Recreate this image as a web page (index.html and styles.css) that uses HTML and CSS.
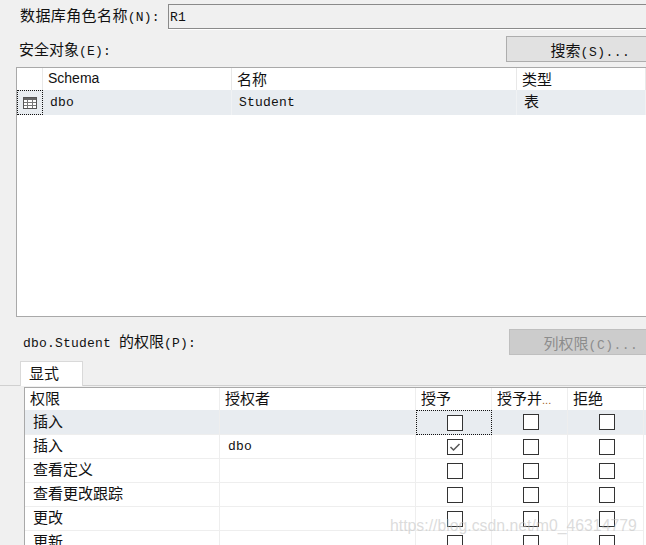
FILE: index.html
```html
<!DOCTYPE html>
<html>
<head>
  <meta charset="utf-8">
  <link rel="stylesheet" href="styles.css">
</head>
<body>
  <div class="name-row">
    <label class="role-label">数据库角色名称<span class="lat">(N):</span></label>
    <div class="name-input"><span class="lat">R1</span></div>
  </div>

  <div class="objects-head">
    <label>安全对象<span class="lat">(E):</span></label>
    <button class="btn">搜索<span class="lat">(S)...</span></button>
  </div>

  <div class="objects-grid">
    <div class="grid-row head-row">
      <div class="cell"></div>
      <div class="cell schema-head">Schema</div>
      <div class="cell">名称</div>
      <div class="cell">类型</div>
    </div>
    <div class="grid-row body-row selected">
      <div class="cell icon-cell">
        <svg width="14" height="12" viewBox="0 0 14 12">
          <rect x="0.5" y="0.5" width="13" height="11" fill="#fff" stroke="#555"/>
          <rect x="1" y="1" width="12" height="2" fill="#666"/>
          <path d="M1 5.5H13M1 8.5H13M4.5 3V11M9.5 3V11" stroke="#777" fill="none"/>
        </svg>
      </div>
      <div class="cell lat">dbo</div>
      <div class="cell lat">Student</div>
      <div class="cell type-cell">表</div>
    </div>
  </div>

  <div class="perms-head">
    <label><span class="lat">dbo.Student </span>的权限<span class="lat">(P):</span></label>
    <button class="btn disabled">列权限<span class="lat">(C)...</span></button>
  </div>

  <div class="tab-strip">
    <div class="tab">显式</div>
  </div>

  <div class="perms-grid">
    <div class="perm-row head-row">
      <div class="cell">权限</div>
      <div class="cell">授权者</div>
      <div class="cell">授予</div>
      <div class="cell">授予并<span class="dots">...</span></div>
      <div class="cell">拒绝</div>
    </div>
    <div class="perm-row selected">
      <div class="cell name-cell">插入</div>
      <div class="cell"></div>
      <div class="cell check-cell focused"><span class="check"></span></div>
      <div class="cell check-cell"><span class="check"></span></div>
      <div class="cell check-cell"><span class="check"></span></div>
    </div>
    <div class="perm-row">
      <div class="cell name-cell">插入</div>
      <div class="cell lat">dbo</div>
      <div class="cell check-cell">
        <span class="check">
          <svg width="14" height="14" viewBox="0 0 14 14"><path d="M2.5 7L5.5 10L11.5 4" fill="none" stroke="#555" stroke-width="1.5"/></svg>
        </span>
      </div>
      <div class="cell check-cell"><span class="check"></span></div>
      <div class="cell check-cell"><span class="check"></span></div>
    </div>
    <div class="perm-row">
      <div class="cell name-cell">查看定义</div>
      <div class="cell"></div>
      <div class="cell check-cell"><span class="check"></span></div>
      <div class="cell check-cell"><span class="check"></span></div>
      <div class="cell check-cell"><span class="check"></span></div>
    </div>
    <div class="perm-row">
      <div class="cell name-cell">查看更改跟踪</div>
      <div class="cell"></div>
      <div class="cell check-cell"><span class="check"></span></div>
      <div class="cell check-cell"><span class="check"></span></div>
      <div class="cell check-cell"><span class="check"></span></div>
    </div>
    <div class="perm-row">
      <div class="cell name-cell">更改</div>
      <div class="cell"></div>
      <div class="cell check-cell"><span class="check"></span></div>
      <div class="cell check-cell"><span class="check"></span></div>
      <div class="cell check-cell"><span class="check"></span></div>
    </div>
    <div class="perm-row">
      <div class="cell name-cell">更新</div>
      <div class="cell"></div>
      <div class="cell check-cell"><span class="check"></span></div>
      <div class="cell check-cell"><span class="check"></span></div>
      <div class="cell check-cell"><span class="check"></span></div>
    </div>
  </div>

  <div class="watermark">https://blog.csdn.net/m0_46314779</div>
</body>
</html>
```

FILE: styles.css
```css
html, body {
  height: 545px;
  overflow: hidden;
}

body {
  position: relative;
  margin: 0;
  background: #f0f0f0;
  color: #111;
  font-family: "Noto Sans CJK SC", sans-serif;
  font-size: 15px;
  line-height: 20px;
}

.lat {
  font-family: "Liberation Mono", monospace;
  font-size: 13px;
  letter-spacing: 0.2px;
}

.name-row {
  display: flex;
  align-items: center;
  height: 25px;
  margin-top: 4px;
  padding-left: 20px;
}

.role-label {
  width: 148px;
  letter-spacing: 0.4px;
}

.name-input {
  flex: 1;
  height: 23px;
  padding-left: 1px;
  border: 1px solid #8a8a8a;
  border-right: none;
  box-shadow: 0 1px 0 #fff;
  line-height: 20px;
}

.objects-head {
  display: flex;
  justify-content: space-between;
  align-items: center;
  height: 26px;
  margin-top: 7px;
  padding-left: 19px;
}

.objects-head label {
  padding-top: 3px;
}

.btn {
  width: 140px;
  height: 26px;
  padding: 0 0 0 28px;
  border: 1px solid #adadad;
  border-right: none;
  background: #e1e1e1;
  color: #111;
  font-family: inherit;
  font-size: 15px;
}

.btn .lat {
  letter-spacing: 0.5px;
}

.btn.disabled {
  width: 137px;
  background: #cccccc;
  border-color: #bfbfbf;
  color: #8c8c8c;
  padding-left: 26px;
}

.objects-grid {
  height: 250px;
  margin: 5px 0 0 16px;
  border: 1px solid #a9a9a9;
  border-right: none;
  background: #fff;
  box-sizing: border-box;
}

.grid-row {
  display: grid;
  grid-template-columns: 26px 189px 285px 1fr;
}

.head-row .cell {
  height: 22px;
  padding-left: 5px;
  line-height: 21px;
  border-right: 1px solid #e8e8e8;
  box-sizing: border-box;
}

.head-row .schema-head {
  font-family: "Liberation Sans", sans-serif;
  font-size: 14px;
}

.body-row .cell {
  height: 25px;
  padding-left: 7px;
  line-height: 25px;
  border-right: 1px solid #f0f2f4;
  box-sizing: border-box;
}

.selected {
  background: #e8ecf0;
}

.body-row .icon-cell {
  display: flex;
  align-items: center;
  justify-content: center;
  padding: 0;
  border: 1px dotted #111;
}

.body-row .type-cell {
  line-height: 21px;
}

.perms-head {
  display: flex;
  justify-content: space-between;
  align-items: center;
  height: 26px;
  margin-top: 12px;
  padding-left: 23px;
}

.perms-head label {
  padding-top: 1px;
}

.tab-strip {
  height: 25px;
  margin-top: 6px;
  padding-left: 20px;
  border-bottom: 1px solid #d0d0d0;
  box-sizing: border-box;
}

.tab {
  width: 63px;
  height: 25px;
  padding-left: 8px;
  border: 1px solid #d9d9d9;
  border-bottom: none;
  background: #fff;
  box-sizing: border-box;
  line-height: 22px;
}

.perms-grid {
  margin: 1px 0 0 24px;
  height: 157px;
  overflow: hidden;
  border-top: 1px solid #a9a9a9;
  border-left: 1px solid #a9a9a9;
  background: #fff;
}

.perm-row {
  display: grid;
  grid-template-columns: 195px 196px 76px 76px 76px;
  height: 24px;
}

.perm-row .cell {
  height: 24px;
  border-right: 1px solid #eeeeee;
  border-bottom: 1px solid #eeeeee;
  box-sizing: border-box;
  padding-left: 8px;
  line-height: 20px;
}

.perm-row .lat {
  line-height: 24px;
}

.perm-row.selected,
.perm-row.selected .cell {
  height: 25px;
  line-height: 22px;
}

.perm-row.head-row,
.perm-row.head-row .cell {
  height: 22px;
}

.perm-row.head-row .cell {
  padding-left: 5px;
  line-height: 20px;
  border-bottom: none;
}

.dots {
  color: #a06020;
  font-family: "Liberation Sans", sans-serif;
  font-size: 11px;
}

.perm-row .check-cell {
  display: flex;
  align-items: center;
  justify-content: center;
  padding: 0 0 0 2px;
}

.perm-row .focused {
  border: 1px dotted #111;
}

.check {
  display: flex;
  align-items: center;
  justify-content: center;
  width: 16px;
  height: 16px;
  border: 1px solid #333;
  background: #fff;
  box-sizing: border-box;
}

.watermark {
  position: absolute;
  left: 390px;
  top: 515px;
  font-family: "Liberation Sans", sans-serif;
  font-size: 15.8px;
  line-height: 22px;
  color: rgba(190, 190, 190, 0.55);
  white-space: nowrap;
}
```
